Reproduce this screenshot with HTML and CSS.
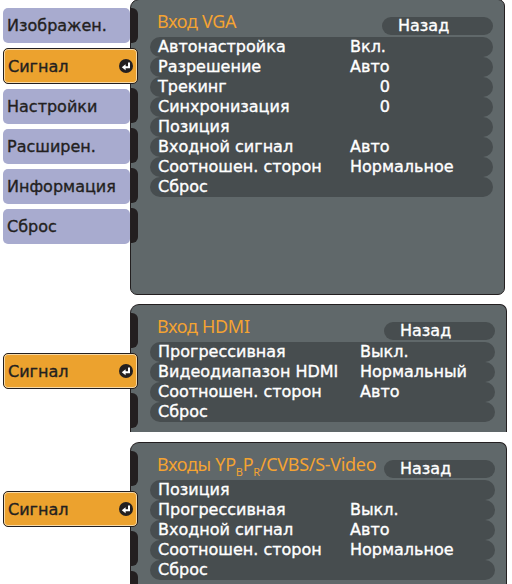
FILE: index.html
```html
<!doctype html>
<html lang="ru">
<head>
    <meta charset="utf-8">
    <title>Сигнал</title>
    <link rel="stylesheet" href="styles.css">
</head>
<body>
    <!-- VGA -->
    <div class="screen first">
        <div class="menu">
            <div class="item">Изображен.</div>
            <div class="item active">Сигнал
                <svg class="enter" width="14" height="14" viewBox="0 0 14 14"><circle cx="7" cy="7" r="7" fill="#231f20"/><path d="M10 3.5V8.2H6" stroke="#fff" stroke-width="2" fill="none"/><polygon points="2.8,8.2 6.6,5.2 6.6,11.2" fill="#fff"/></svg>
            </div>
            <div class="item">Настройки</div>
            <div class="item">Расширен.</div>
            <div class="item">Информация</div>
            <div class="item">Сброс</div>
        </div>
        <div class="panel tall">
            <div class="rail">
                <span class="tab"></span>
                <span class="tab gap"></span>
                <span class="tab"></span>
                <span class="tab"></span>
                <span class="tab"></span>
                <span class="tab"></span>
            </div>
            <div class="content">
                <div class="head">
                    <span class="title">Вход VGA</span>
                    <span class="back">Назад</span>
                </div>
                <ul class="rows">
                    <li><span>Автонастройка</span><span>Вкл.</span></li>
                    <li><span>Разрешение</span><span>Авто</span></li>
                    <li><span>Трекинг</span><span class="num">0</span></li>
                    <li><span>Синхронизация</span><span class="num">0</span></li>
                    <li><span>Позиция</span><span></span></li>
                    <li><span>Входной сигнал</span><span>Авто</span></li>
                    <li><span>Соотношен. сторон</span><span>Нормальное</span></li>
                    <li><span>Сброс</span><span></span></li>
                </ul>
            </div>
        </div>
    </div>

    <!-- HDMI -->
    <div class="screen second">
        <div class="menu single">
            <div class="item active">Сигнал
                <svg class="enter" width="14" height="14" viewBox="0 0 14 14"><circle cx="7" cy="7" r="7" fill="#231f20"/><path d="M10 3.5V8.2H6" stroke="#fff" stroke-width="2" fill="none"/><polygon points="2.8,8.2 6.6,5.2 6.6,11.2" fill="#fff"/></svg>
            </div>
        </div>
        <div class="panel cut short">
            <div class="rail">
                <span class="tab"></span>
                <span class="tab gap"></span>
                <span class="tab"></span>
            </div>
            <div class="content">
                <div class="head">
                    <span class="title">Вход HDMI</span>
                    <span class="back">Назад</span>
                </div>
                <ul class="rows wide">
                    <li><span>Прогрессивная</span><span>Выкл.</span></li>
                    <li><span>Видеодиапазон HDMI</span><span>Нормальный</span></li>
                    <li><span>Соотношен. сторон</span><span>Авто</span></li>
                    <li><span>Сброс</span><span></span></li>
                </ul>
            </div>
        </div>
    </div>

    <!-- Component / Video -->
    <div class="screen third">
        <div class="menu single">
            <div class="item active">Сигнал
                <svg class="enter" width="14" height="14" viewBox="0 0 14 14"><circle cx="7" cy="7" r="7" fill="#231f20"/><path d="M10 3.5V8.2H6" stroke="#fff" stroke-width="2" fill="none"/><polygon points="2.8,8.2 6.6,5.2 6.6,11.2" fill="#fff"/></svg>
            </div>
        </div>
        <div class="panel cut">
            <div class="rail">
                <span class="tab"></span>
                <span class="tab gap"></span>
                <span class="tab"></span>
                <span class="tab"></span>
            </div>
            <div class="content">
                <div class="head">
                    <span class="title">Входы YP<sub>B</sub>P<sub>R</sub>/CVBS/S-Video</span>
                    <span class="back">Назад</span>
                </div>
                <ul class="rows">
                    <li><span>Позиция</span><span></span></li>
                    <li><span>Прогрессивная</span><span>Выкл.</span></li>
                    <li><span>Входной сигнал</span><span>Авто</span></li>
                    <li><span>Соотношен. сторон</span><span>Нормальное</span></li>
                    <li><span>Сброс</span><span></span></li>
                </ul>
            </div>
        </div>
    </div>
</body>
</html>
```

FILE: styles.css
```css
body {
    margin: 0;
    height: 584px;
    overflow: hidden;
    background-color: white;
    font-family: 'DejaVu Sans', sans-serif;
    font-size: 16px;
    color: #231f20;
}
.screen {
    display: flex;
}
.first {
    margin-top: -1px;
}
.second {
    margin-top: 9px;
}
.third {
    margin-top: 10px;
}
.menu {
    width: 130px;
    flex: none;
    box-sizing: border-box;
    padding: 9px 0 0 3px;
    display: flex;
    flex-direction: column;
    gap: 5px;
}
.menu.single {
    padding-top: 49px;
}
.item {
    height: 35px;
    box-sizing: border-box;
    border-radius: 5px;
    background-color: #a8abcf;
    display: flex;
    align-items: center;
    padding-left: 4px;
    -webkit-text-stroke: 0.35px #231f20;
}
.item.active {
    width: 135px;
    height: 36px;
    background-color: #eca22e;
    border: 1px solid #231f20;
    box-shadow: inset 0 0 0 1px #f7d9a6;
    justify-content: space-between;
    padding-right: 4px;
    position: relative;
    z-index: 1;
}
.enter {
    display: block;
}
.panel {
    width: 375px;
    height: 296px;
    box-sizing: border-box;
    border: 1px solid #231f20;
    border-radius: 9px 7px 7px 7px;
    background-color: #60686a;
    display: flex;
    overflow: hidden;
}
.panel.cut {
    width: 377px;
    height: 160px;
    border-bottom: none;
    border-radius: 9px 7px 0 0;
}
.panel.cut.short {
    height: 128px;
}
.rail {
    width: 7px;
    flex: none;
    padding-top: 8px;
    display: flex;
    flex-direction: column;
    gap: 5px;
}
.tab {
    height: 35px;
    flex: none;
    background-color: #231f20;
    border-radius: 0 6px 6px 0;
}
.tab.gap {
    background-color: transparent;
}
.content {
    flex: 1;
    margin-left: 12px;
    padding-right: 11px;
}
.head {
    height: 37px;
    box-sizing: border-box;
    display: flex;
    align-items: flex-end;
    padding: 0 0 2px 7px;
}
.title {
    font-family: 'Noto Sans', sans-serif;
    font-size: 18px;
    line-height: 18px;
    letter-spacing: -0.3px;
    color: #f4a332;
    margin-bottom: 5px;
    white-space: nowrap;
}
.title sub {
    font-size: 11px;
    line-height: 0;
    vertical-align: -5px;
}
.back {
    margin-left: auto;
    width: 111px;
    height: 18px;
    flex: none;
    box-sizing: border-box;
    border-radius: 9px;
    background-color: #474d4f;
    color: white;
    padding-left: 16px;
    line-height: 18px;
    -webkit-text-stroke: 0.35px white;
}
.rows {
    list-style: none;
    margin: 0;
    padding: 0;
}
.rows li {
    height: 20px;
    border-radius: 10px;
    background-color: #474d4f;
    display: grid;
    grid-template-columns: 192px auto;
    padding-left: 8px;
    line-height: 20px;
    color: white;
    white-space: nowrap;
    -webkit-text-stroke: 0.35px white;
}
.rows.wide li {
    grid-template-columns: 202px auto;
}
.num {
    width: 40px;
    text-align: right;
}
```
